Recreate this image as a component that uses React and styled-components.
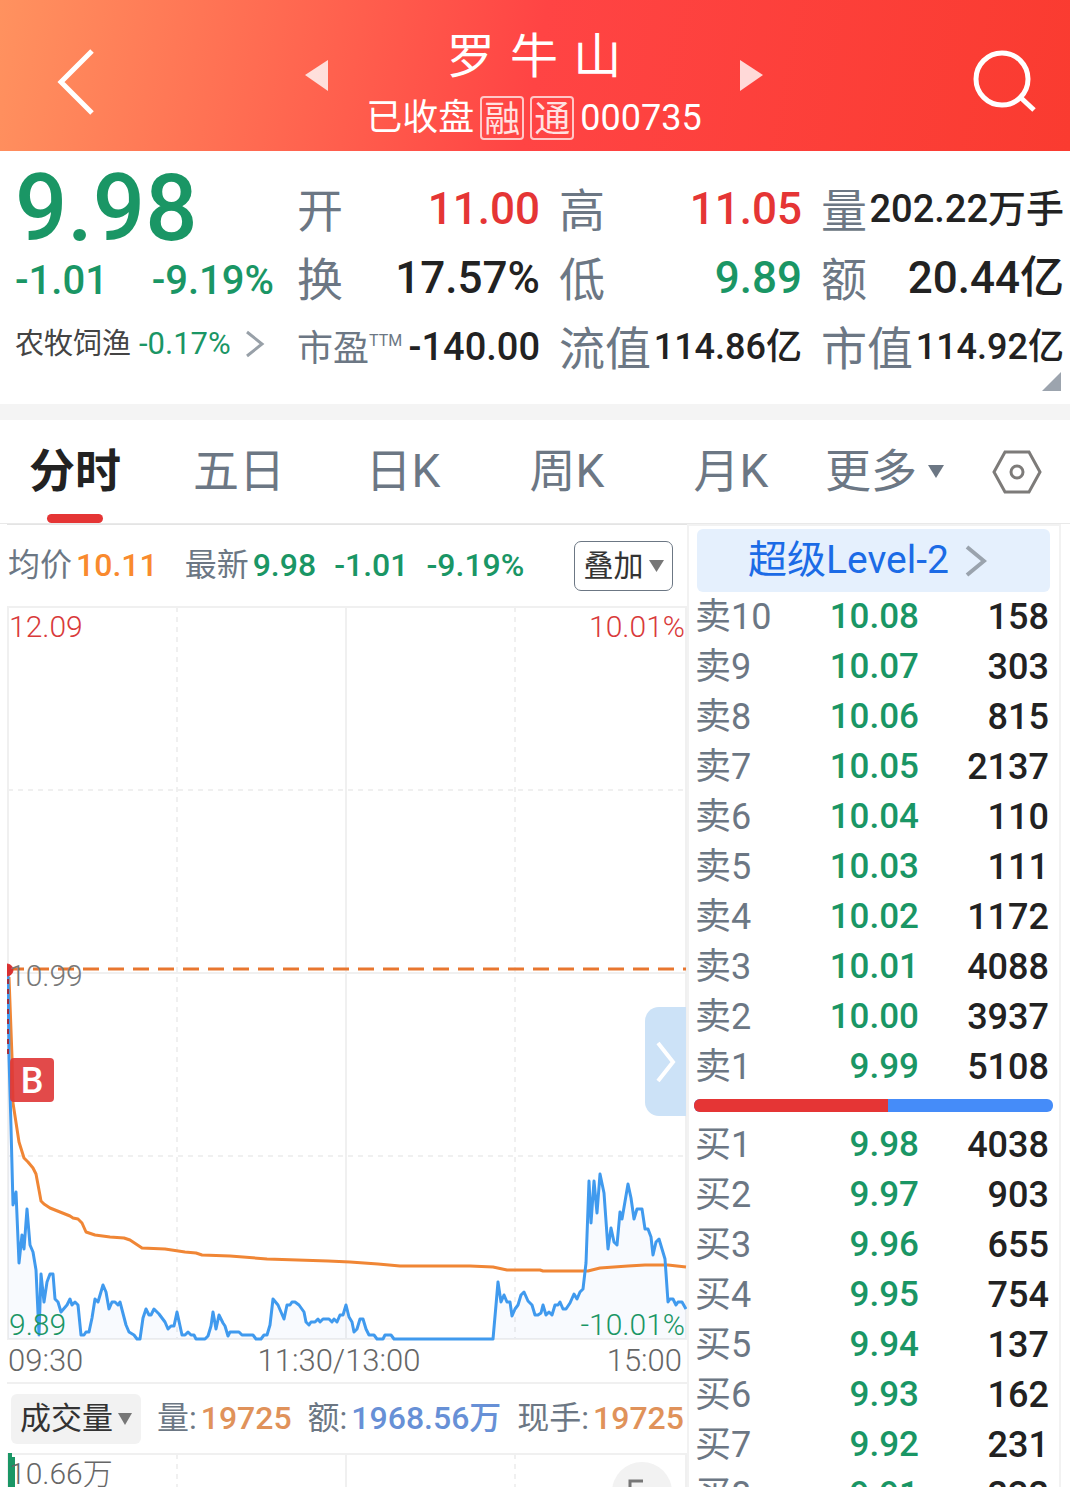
import styled, { createGlobalStyle } from "styled-components";

const colors = {
  red: "#e53535",
  green: "#1a9665",
  dark: "#222222",
  slate: "#6c7784",
  gray: "#787878",
  orange: "#f98a2e",
  amber: "#e0925a",
  blue: "#6790d6",
  line: "#f0f0f0",
};

const GlobalStyle = createGlobalStyle`
  * {
    box-sizing: border-box;
  }

  body {
    margin: 0;
    background-color: #fff;
    color: ${colors.dark};
    font-family: Roboto, "Noto Sans CJK SC", sans-serif;
    line-height: 1.2;
  }

  button {
    border: none;
    background: none;
    padding: 0;
    color: inherit;
    font: inherit;
    cursor: pointer;
  }

  svg {
    display: block;
  }
`;

const Page = styled.div`
  display: flex;
  flex-direction: column;
  height: 100vh;
  overflow: hidden;
`;

const Header = styled.header`
  display: flex;
  align-items: center;
  justify-content: space-between;
  flex: none;
  height: 151px;
  padding: 12px 32px 0 56px;
  background: linear-gradient(100deg, #ff925f 0%, #ff4444 50%, #fa3b30 100%);
  color: #fff;
`;

const StockSwitch = styled.div`
  display: flex;
  gap: 38px;
  margin-top: -12px;

  .arrow {
    height: 151px;
  }
`;

const StockName = styled.div`
  display: flex;
  flex-direction: column;
  align-items: center;
  padding-top: 24px;

  h1 {
    margin: 0;
    font-family: "DejaVu Sans", "Noto Sans CJK SC", sans-serif;
    font-size: 48px;
    font-weight: 400;
    line-height: 64px;
  }
`;

const StockCode = styled.div`
  display: flex;
  align-items: center;
  gap: 6px;
  font-size: 36px;
  line-height: 60px;
`;

const Tag = styled.span`
  width: 44px;
  height: 44px;
  border: 2px solid rgba(255, 255, 255, .7);
  border-radius: 4px;
  font-size: 36px;
  line-height: 44px;
  text-align: center;
  color: rgba(255, 255, 255, .85);
`;

const Quote = styled.section`
  display: flex;
  flex: none;
  position: relative;
  height: 269px;
  border-bottom: 16px solid #f4f4f4;
  padding: 0 6px 0 15px;

  .more {
    position: absolute;
    right: 9px;
    bottom: 13px;
  }
`;

const PriceBlock = styled.div`
  width: 282px;
  padding-top: 6px;

  .price {
    font-size: 92px;
    font-weight: 500;
    line-height: 104px;
    color: ${colors.green};
  }

  .change {
    display: flex;
    justify-content: space-between;
    width: 259px;
    font-size: 40px;
    font-weight: 500;
    line-height: 40px;
    color: ${colors.green};
  }
`;

const Sector = styled.a`
  display: flex;
  align-items: center;
  gap: 8px;
  margin-top: 19px;
  font-size: 29px;
  line-height: 48px;
  color: #444;
  text-decoration: none;

  span {
    font-size: 31px;
    color: ${colors.green};
  }

  svg {
    margin-left: 6px;
  }
`;

const StatGrid = styled.dl`
  display: grid;
  flex: 1;
  grid-template-columns: repeat(3, 1fr);
  grid-auto-rows: 69px;
  column-gap: 19px;
  margin: 0;
  padding-top: 24px;
`;

const Stat = styled.div`
  display: flex;
  align-items: center;
  justify-content: space-between;
  white-space: nowrap;

  dt {
    padding-top: 4px;
    font-size: ${({ $labelSize }) => $labelSize || 46}px;
    line-height: 69px;
    color: ${colors.slate};
  }

  sup {
    font-size: 16px;
    line-height: 16px;
    vertical-align: 15px;
  }

  dd {
    margin: 0;
    font-size: ${({ $size }) => $size}px;
    font-weight: 500;
    line-height: 69px;
    color: ${({ $color }) => $color || colors.dark};
  }
`;

const TabBar = styled.nav`
  display: flex;
  align-items: center;
  justify-content: space-between;
  flex: none;
  height: 104px;
  border-bottom: 1px solid #e9e9e9;
  padding: 0 28px 0 29px;
  font-size: 46px;
  color: ${colors.slate};
`;

const Tabs = styled.div`
  display: flex;
  gap: 72px;
`;

const Tab = styled.button`
  position: relative;
  width: 92px;
  height: 103px;
  white-space: nowrap;
  font-weight: ${({ $active }) => ($active ? 700 : 400)};
  color: ${({ $active }) => ($active ? colors.dark : colors.slate)};

  &::after {
    content: "";
    display: ${({ $active }) => ($active ? "block" : "none")};
    position: absolute;
    bottom: 0;
    left: 18px;
    width: 56px;
    height: 9px;
    border-radius: 5px;
    background-color: ${colors.red};
  }
`;

const MoreButton = styled.button`
  display: flex;
  align-items: center;
  gap: 11px;
`;

const Content = styled.main`
  display: grid;
  flex: 1;
  grid-template-columns: minmax(0, 1fr) 374px;
  min-height: 0;
  padding: 0 9px 0 7px;
`;

const ChartPanel = styled.section`
  display: flex;
  flex-direction: column;
  min-width: 0;
`;

const InfoRow = styled.div`
  display: flex;
  align-items: center;
  flex: none;
  gap: 27px;
  height: 82px;
  border-top: 1px solid #e4e4e4;
  padding: 0 14px 0 1px;
  font-size: 32px;
  white-space: nowrap;
`;

const Latest = styled.div`
  display: flex;
  gap: 18px;
`;

const Figure = styled.span`
  display: flex;
  gap: 4px;
  font-weight: 500;
  color: ${({ $color }) => $color};

  .label {
    font-weight: 400;
    color: ${colors.slate};
  }
`;

const OverlayButton = styled.button`
  display: flex;
  align-items: center;
  justify-content: center;
  gap: 5px;
  width: 99px;
  height: 50px;
  margin-left: auto;
  border: 1px solid ${colors.slate};
  border-radius: 7px;
  font-size: 30px;
  color: #333;
`;

const Chart = styled.div`
  position: relative;
  flex: none;
  height: 735px;

  svg.plot {
    width: 100%;
    height: 100%;
  }
`;

const ScaleLabel = styled.span`
  position: absolute;
  top: ${({ $top }) => $top}px;
  ${({ $right }) => ($right ? "right: 2px;" : "left: 2px;")}
  font-size: 30px;
  font-weight: 300;
  line-height: 40px;
  color: ${({ $color }) => $color};
`;

const TradeMark = styled.span`
  position: absolute;
  top: 452px;
  left: 3px;
  width: 44px;
  height: 44px;
  border-radius: 4px;
  background-color: rgba(223, 54, 54, .9);
  font-size: 36px;
  font-weight: 500;
  line-height: 46px;
  text-align: center;
  color: #fff;
`;

const DrawerHandle = styled.button`
  display: flex;
  align-items: center;
  justify-content: center;
  position: absolute;
  top: 401px;
  right: 1px;
  width: 41px;
  height: 109px;
  border-radius: 14px 0 0 14px;
  background-color: #cce2f7;
`;

const TimeAxis = styled.div`
  display: flex;
  justify-content: space-between;
  flex: none;
  height: 43px;
  border-bottom: 2px solid ${colors.line};
  padding: 0 5px 0 1px;
  font-size: 31px;
  font-weight: 300;
  line-height: 40px;
  color: #666;

  .noon {
    padding-right: 12px;
  }
`;

const VolumeBar = styled.div`
  display: flex;
  align-items: center;
  justify-content: space-between;
  flex: none;
  height: 69px;
  padding: 0 3px 0 4px;
  font-size: 32px;
  white-space: nowrap;
`;

const VolumeButton = styled.button`
  display: flex;
  align-items: center;
  justify-content: center;
  gap: 5px;
  width: 130px;
  height: 50px;
  border-radius: 6px;
  background-color: #f2f2f2;
  font-size: 31px;
  color: #333;
`;

const VolumeChart = styled.div`
  position: relative;
  flex: 1;
  min-height: 34px;
  overflow: hidden;
`;

const FullScreen = styled.button`
  position: absolute;
  top: 9px;
  right: 15px;
  width: 60px;
  height: 60px;
  border-radius: 50%;
  background-color: #f2f2f2;
`;

const BookPanel = styled.aside`
  border: 2px solid #f2f2f2;
  border-bottom: none;
  padding: 3px 6px 0 5px;
  overflow: hidden;
`;

const LevelButton = styled.button`
  display: flex;
  align-items: center;
  justify-content: center;
  gap: 16px;
  width: 353px;
  height: 63px;
  margin-left: 3px;
  border-radius: 6px;
  padding-right: 12px;
  background-color: #e5f0fd;
  font-size: 39px;
  color: #1b6be6;
`;

const BookTable = styled.table`
  width: 100%;
  border-collapse: collapse;
  table-layout: fixed;

  th,
  td {
    height: 50px;
    padding: 0;
    font-size: 36px;
    font-weight: 500;
    line-height: 48px;
    text-align: right;
  }

  th {
    width: 90px;
    padding-left: 1px;
    font-weight: 400;
    text-align: left;
    color: ${colors.slate};
  }

  .price {
    font-size: 35px;
    color: ${colors.green};
  }

  .amount {
    width: 134px;
    padding-right: 4px;
  }
`;

const RatioBar = styled.div`
  display: flex;
  height: 13px;
  margin: 7px 0 8px;
  border-radius: 6px;
  overflow: hidden;
  background-color: #458cf9;

  div {
    background-color: ${colors.red};
  }
`;

const PRICE_LINE =
  "1,367 2,451 4,521 6,599 9,586 12,657 15,629 17,643 20,603 23,639 26,646 29,664 32,729 34,668 37,696 40,676 43,668 46,668 48,693 51,696 54,706 60,699 63,693 65,699 68,696 71,699 74,729 77,729 79,726 82,726 85,712 88,693 91,696 96,679 99,686 102,703 105,696 108,696 111,699 113,696 119,719 122,726 127,729 130,733 133,733 136,712 139,703 142,709 144,709 147,703 152,708 158,716 161,723 164,720 167,720 170,706 175,729 178,729 181,726 184,729 187,729 189,733 198,733 201,730 204,720 206,706 209,723 212,709 216,717 218,720 221,730 223,726 232,726 235,729 246,729 249,733 254,733 257,729 260,729 263,719 266,693 271,699 277,713 280,699 283,699 285,696 288,696 292,699 297,706 299,716 302,719 304,716 308,716 311,713 313,716 316,713 322,713 325,716 327,713 330,716 333,709 336,709 339,699 342,711 345,716 347,726 350,723 353,713 356,713 359,723 362,729 367,729 370,733 376,733 378,729 384,729 387,733 486,733 489,699 491,676 494,696 497,689 500,696 503,696 505,710 508,703 511,699 514,689 517,686 521,695 525,699 528,709 531,709 534,707 536,699 539,709 542,706 545,709 548,699 551,699 553,696 556,703 559,703 563,697 567,688 570,693 573,686 576,683 579,657 582,575 584,617 587,575 590,607 593,568 597,587 601,643 604,622 607,636 610,639 613,606 615,613 621,578 624,592 627,613 630,603 635,603 638,623 641,623 644,631 646,649 649,636 652,633 658,653 661,696 663,693 666,693 669,699 671,696 675,696 679,703";

const AVERAGE_LINE =
  "2,371 5,451 6,497 12,536 17,552 21,556 26,562 29,568 32,584 34,595 37,598 43,602 53,606 63,610 66,612 71,613 75,617 79,626 88,629 103,631 117,632 123,634 135,642 158,643 178,646 189,647 195,649 223,650 260,653 321,655 343,656 371,658 393,660 463,660 486,661 500,664 533,664 536,665 581,665 593,662 621,660 638,659 661,659 679,661";

const stats = [
  { label: "开", value: "11.00", size: 44, color: colors.red },
  { label: "高", value: "11.05", size: 44, color: colors.red },
  { label: "量", value: "202.22万手", size: 38 },
  { label: "换", value: "17.57%", size: 44 },
  { label: "低", value: "9.89", size: 44, color: colors.green },
  { label: "额", value: "20.44亿", size: 44 },
  { label: "市盈", sup: "TTM", value: "-140.00", size: 38, labelSize: 36 },
  { label: "流值", value: "114.86亿", size: 36 },
  { label: "市值", value: "114.92亿", size: 36 },
];

const tabs = ["分时", "五日", "日K", "周K", "月K"];

const sells = [
  ["卖10", "10.08", "158"],
  ["卖9", "10.07", "303"],
  ["卖8", "10.06", "815"],
  ["卖7", "10.05", "2137"],
  ["卖6", "10.04", "110"],
  ["卖5", "10.03", "111"],
  ["卖4", "10.02", "1172"],
  ["卖3", "10.01", "4088"],
  ["卖2", "10.00", "3937"],
  ["卖1", "9.99", "5108"],
];

const buys = [
  ["买1", "9.98", "4038"],
  ["买2", "9.97", "903"],
  ["买3", "9.96", "655"],
  ["买4", "9.95", "754"],
  ["买5", "9.94", "137"],
  ["买6", "9.93", "162"],
  ["买7", "9.92", "231"],
  ["买8", "9.91", "232"],
];

function Caret({ width, height, color }) {
  return (
    <svg width={width} height={height} viewBox="0 0 16 13" preserveAspectRatio="none" aria-hidden="true">
      <path d="M0 0H16L8 13Z" fill={color} />
    </svg>
  );
}

function Chevron({ width, height, color, stroke }) {
  return (
    <svg width={width} height={height} viewBox={`0 0 ${width} ${height}`} fill="none" aria-hidden="true">
      <path
        d={`M2 2L${width - 3} ${height / 2}L2 ${height - 2}`}
        stroke={color}
        strokeWidth={stroke}
      />
    </svg>
  );
}

function Book({ rows }) {
  return (
    <BookTable>
      <tbody>
        {rows.map(([level, price, amount]) => (
          <tr key={level}>
            <th scope="row">{level}</th>
            <td className="price">{price}</td>
            <td className="amount">{amount}</td>
          </tr>
        ))}
      </tbody>
    </BookTable>
  );
}

function TimeChart() {
  return (
    <svg className="plot" viewBox="0 0 680 735" preserveAspectRatio="none" aria-hidden="true">
      <g stroke={colors.line} strokeWidth="2" fill="none">
        <path d="M1 1H679V733H1ZM339 1V733M1 367H679" />
        <path d="M170 1V733M508 1V733M1 184H679M1 550H679" strokeDasharray="5 5" />
      </g>
      <polygon points={`1,733 ${PRICE_LINE} 679,733`} fill="#4a80f0" fillOpacity=".04" />
      <path d="M1 363H679" stroke="#e8762f" strokeWidth="3" strokeDasharray="16 9" />
      <polyline points={AVERAGE_LINE} fill="none" stroke="#f08635" strokeWidth="3" strokeLinejoin="round" />
      <polyline points={PRICE_LINE} fill="none" stroke="#409aee" strokeWidth="3" strokeLinejoin="round" />
      <path d="M1 373V448" stroke="#a03040" strokeWidth="2" strokeDasharray="5 5" />
      <path d="M0 358A6 6 0 0 1 0 370Z" fill="#d93030" stroke="#d93030" />
    </svg>
  );
}

export default function App() {
  return (
    <Page>
      <GlobalStyle />

      <Header>
        <button aria-label="返回">
          <svg width="40" height="66" viewBox="0 0 40 66" fill="none">
            <path d="M36 2L5 33L36 64" stroke="#fff" strokeWidth="5" />
          </svg>
        </button>

        <StockSwitch>
          <button className="arrow" aria-label="上一只">
            <svg width="23" height="31" viewBox="0 0 23 31">
              <path d="M23 0V31L0 15Z" fill="#fff" fillOpacity=".8" />
            </svg>
          </button>
          <StockName>
            <h1>罗 牛 山</h1>
            <StockCode>
              <span>已收盘</span>
              <Tag>融</Tag>
              <Tag>通</Tag>
              <span>000735</span>
            </StockCode>
          </StockName>
          <button className="arrow" aria-label="下一只">
            <svg width="23" height="31" viewBox="0 0 23 31">
              <path d="M0 0V31L23 15Z" fill="#fff" fillOpacity=".8" />
            </svg>
          </button>
        </StockSwitch>

        <button aria-label="搜索">
          <svg width="66" height="66" viewBox="0 0 66 66" fill="none" stroke="#fff" strokeWidth="5">
            <circle cx="30" cy="30" r="26" />
            <path d="M48 48L62 61" />
          </svg>
        </button>
      </Header>

      <Quote>
        <PriceBlock>
          <div className="price">9.98</div>
          <div className="change">
            <span>-1.01</span>
            <span>-9.19%</span>
          </div>
          <Sector href="#">
            农牧饲渔 <span>-0.17%</span>
            <Chevron width={20} height={28} color="#98a0a8" stroke={3} />
          </Sector>
        </PriceBlock>
        <StatGrid>
          {stats.map(({ label, sup, value, size, labelSize, color }) => (
            <Stat key={label} $size={size} $labelSize={labelSize} $color={color}>
              <dt>
                {label}
                {sup && <sup>{sup}</sup>}
              </dt>
              <dd>{value}</dd>
            </Stat>
          ))}
        </StatGrid>
        <svg className="more" width="19" height="19" viewBox="0 0 19 19" aria-hidden="true">
          <path d="M19 0V19H0Z" fill="#9ca4ae" />
        </svg>
      </Quote>

      <TabBar>
        <Tabs>
          {tabs.map((tab, index) => (
            <Tab key={tab} $active={index === 0}>{tab}</Tab>
          ))}
        </Tabs>
        <MoreButton>
          更多
          <Caret width={16} height={13} color={colors.slate} />
        </MoreButton>
        <button aria-label="设置">
          <svg width="50" height="44" viewBox="0 0 50 44" fill="none" stroke="#7d7b79" strokeWidth="3">
            <path d="M13 2H37L48 22L37 42H13L2 22Z" />
            <circle cx="25" cy="22" r="6" />
          </svg>
        </button>
      </TabBar>

      <Content>
        <ChartPanel>
          <InfoRow>
            <Figure $color={colors.orange}>
              <span className="label">均价</span>10.11
            </Figure>
            <Latest>
              <Figure $color={colors.green}>
                <span className="label">最新</span>9.98
              </Figure>
              <Figure $color={colors.green}>-1.01</Figure>
              <Figure $color={colors.green}>-9.19%</Figure>
            </Latest>
            <OverlayButton>
              叠加
              <Caret width={15} height={12} color="#777" />
            </OverlayButton>
          </InfoRow>

          <Chart>
            <TimeChart />
            <ScaleLabel $top={1} $color="#d93a3a">12.09</ScaleLabel>
            <ScaleLabel $top={1} $right $color="#d93a3a">10.01%</ScaleLabel>
            <ScaleLabel $top={350} $color={colors.gray}>10.99</ScaleLabel>
            <ScaleLabel $top={699} $color={colors.green}>9.89</ScaleLabel>
            <ScaleLabel $top={699} $right $color={colors.green}>-10.01%</ScaleLabel>
            <TradeMark>B</TradeMark>
            <DrawerHandle aria-label="展开">
              <Chevron width={20} height={42} color="#fff" stroke={4} />
            </DrawerHandle>
          </Chart>

          <TimeAxis>
            <span>09:30</span>
            <span className="noon">11:30/13:00</span>
            <span>15:00</span>
          </TimeAxis>

          <VolumeBar>
            <VolumeButton>
              成交量
              <Caret width={14} height={12} color="#777" />
            </VolumeButton>
            <Figure $color={colors.amber}>
              <span className="label">量:</span>19725
            </Figure>
            <Figure $color={colors.blue}>
              <span className="label">额:</span>1968.56万
            </Figure>
            <Figure $color={colors.amber}>
              <span className="label">现手:</span>19725
            </Figure>
          </VolumeBar>

          <VolumeChart>
            <svg width="100%" height="160" viewBox="0 0 680 160" preserveAspectRatio="none" aria-hidden="true">
              <path d="M1 160V1H679V160M339 1V160" stroke={colors.line} strokeWidth="2" fill="none" />
              <path d="M170 1V160M508 1V160" stroke={colors.line} strokeWidth="2" strokeDasharray="5 5" />
              <path d="M1 0H5V160H1ZM5 4H8V160H5Z" fill={colors.green} />
            </svg>
            <ScaleLabel $top={1} $color="#666">10.66万</ScaleLabel>
            <FullScreen aria-label="全屏">
              <svg width="60" height="60" viewBox="0 0 60 60" fill="none" stroke="#777" strokeWidth="3">
                <path d="M18 32V19H31M42 28V41H29" />
              </svg>
            </FullScreen>
          </VolumeChart>
        </ChartPanel>

        <BookPanel>
          <LevelButton>
            超级Level-2
            <Chevron width={22} height={32} color="#9aa3ad" stroke={4} />
          </LevelButton>
          <Book rows={sells} />
          <RatioBar>
            <div style={{ width: "54%" }} />
          </RatioBar>
          <Book rows={buys} />
        </BookPanel>
      </Content>
    </Page>
  );
}
